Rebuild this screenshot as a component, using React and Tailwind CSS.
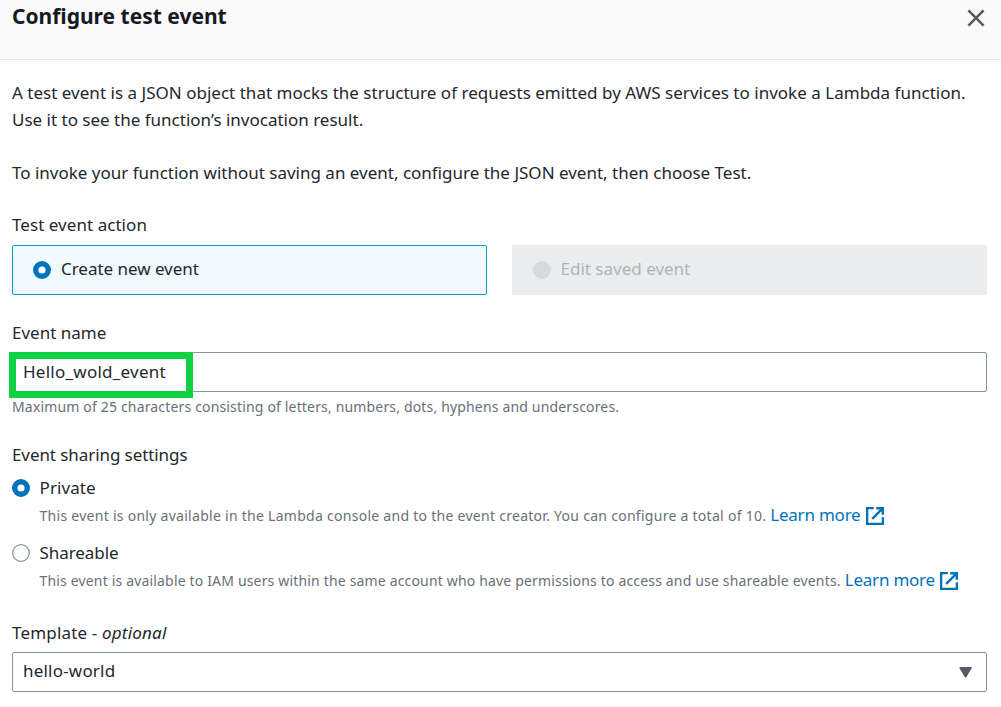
function Radio({ variant }) {
  return (
    <svg className="h-[18px] w-[18px] shrink-0" viewBox="0 0 18 18">
      {variant === "checked" && <circle cx="9" cy="9" r="6.3" fill="#fff" stroke="#0073bb" strokeWidth="5.4" />}
      {variant === "empty" && <circle cx="9" cy="9" r="8.3" fill="#fff" stroke="#879596" strokeWidth="1.3" />}
      {variant === "disabled" && <circle cx="9" cy="9" r="8.9" fill="#d5dbdb" />}
    </svg>
  );
}

function LearnMore() {
  return (
    <a className="ml-[4px] flex items-center text-[17px] tracking-[-0.22px] text-[#0073bb]">
      Learn more
      <svg className="mt-px ml-[5.3px] h-[18px] w-[18px]" viewBox="0 0 18 18" fill="none" stroke="#0073bb" strokeWidth="2.3">
        <path d="M7.8 1.15H1.15v15.7h15.7v-6.6" />
        <path d="M10.2 1.15h6.65v6.65M16.6 1.4L6.2 11.8" strokeWidth="2.5" />
      </svg>
    </a>
  );
}

export default function App() {
  return (
    <div className="flex h-[707px] w-[1001px] flex-col overflow-hidden bg-white font-['Noto_Sans',sans-serif] text-[17px] leading-[26px] whitespace-nowrap text-[#24272d]">
      <header className="flex h-[60px] shrink-0 items-start justify-between border-b border-[#e5e7e7] bg-[#fafafa] pr-[16px] pl-[12px]">
        <h1 className="pt-[3px] text-[21px] leading-[26px] font-bold text-[#16191f]">Configure test event</h1>
        <svg className="mt-[9px] h-[18px] w-[18px]" viewBox="0 0 18 18" stroke="#545b64" strokeWidth="2.6">
          <path d="M1.4 1.4l15.2 15.2M16.6 1.4L1.4 16.6" />
        </svg>
      </header>

      <main className="flex flex-col pr-[14px] pl-[12px]">
        <div className="pt-[19px] leading-[27px]">
          <p className="tracking-[0.018px]">A test event is a JSON object that mocks the structure of requests emitted by AWS services to invoke a Lambda function.</p>
          <p>Use it to see the function’s invocation result.</p>
          <p className="mt-[26px]">To invoke your function without saving an event, configure the JSON event, then choose Test.</p>
        </div>

        <div className="mt-[26px] tracking-[0.05px]">Test event action</div>
        <div className="mt-[7px] grid h-[50px] grid-cols-2 gap-[25px]">
          <div className="flex items-center rounded-[2px] border border-[#00a1c9] bg-[#f1faff] pl-[20px]">
            <Radio variant="checked" />
            <span className="ml-[10px] pb-[2px] tracking-[-0.03px]">Create new event</span>
          </div>
          <div className="flex items-center rounded-[2px] bg-[#eaeded] pl-[21px] text-[#aab7b8]">
            <Radio variant="disabled" />
            <span className="ml-[9.5px] pb-[2px]">Edit saved event</span>
          </div>
        </div>

        <div className="mt-[25px]">Event name</div>
        <div className="relative mt-[6px] flex h-[40px] items-center rounded-[2px] border border-[#879596] pb-[1px] pl-[10px] tracking-[0.25px]">
          Hello_wold_event
          <div className="absolute top-[-1px] left-[-4px] h-[46px] w-[184px] border-[7px] border-[#10d144]" />
        </div>
        <div className="mt-[5px] text-[14px] leading-[20px] tracking-[0.165px] text-[#687078]">Maximum of 25 characters consisting of letters, numbers, dots, hyphens and underscores.</div>

        <div className="mt-[25px] tracking-[-0.08px]">Event sharing settings</div>
        <div className="mt-[7px] flex h-[26px] items-center">
          <Radio variant="checked" />
          <span className="ml-[9.5px] pb-px tracking-[0.1px]">Private</span>
        </div>
        <div className="mt-px mb-px flex h-[26px] items-center pl-[27.5px] text-[14px] tracking-[0.276px] text-[#687078]">
          <span className="pt-px">This event is only available in the Lambda console and to the event creator. You can configure a total of 10.</span>
          <LearnMore />
        </div>
        <div className="mt-[11px] flex h-[26px] items-center">
          <Radio variant="empty" />
          <span className="ml-[9.5px] pb-px tracking-[-0.07px]">Shareable</span>
        </div>
        <div className="mt-px mb-px flex h-[26px] items-center pl-[27.5px] text-[14px] tracking-[0.169px] text-[#687078]">
          <span className="pt-px">This event is available to IAM users within the same account who have permissions to access and use shareable events.</span>
          <LearnMore />
        </div>

        <div className="mt-[26px] tracking-[0.17px]">Template - <span className="tracking-[0.2px] italic">optional</span></div>
        <div className="mt-[6px] flex h-[40px] items-center justify-between rounded-[2px] border border-[#879596] pr-[14px] pl-[10px]">
          <span className="pb-[2px] tracking-[0.2px]">hello-world</span>
          <svg className="h-[11px] w-[13px]" viewBox="0 0 13 11">
            <path d="M1.2 .8h10.8L6.6 9.8z" fill="#545b64" stroke="#545b64" strokeWidth="1.6" strokeLinejoin="round" />
          </svg>
        </div>
      </main>
    </div>
  );
}
